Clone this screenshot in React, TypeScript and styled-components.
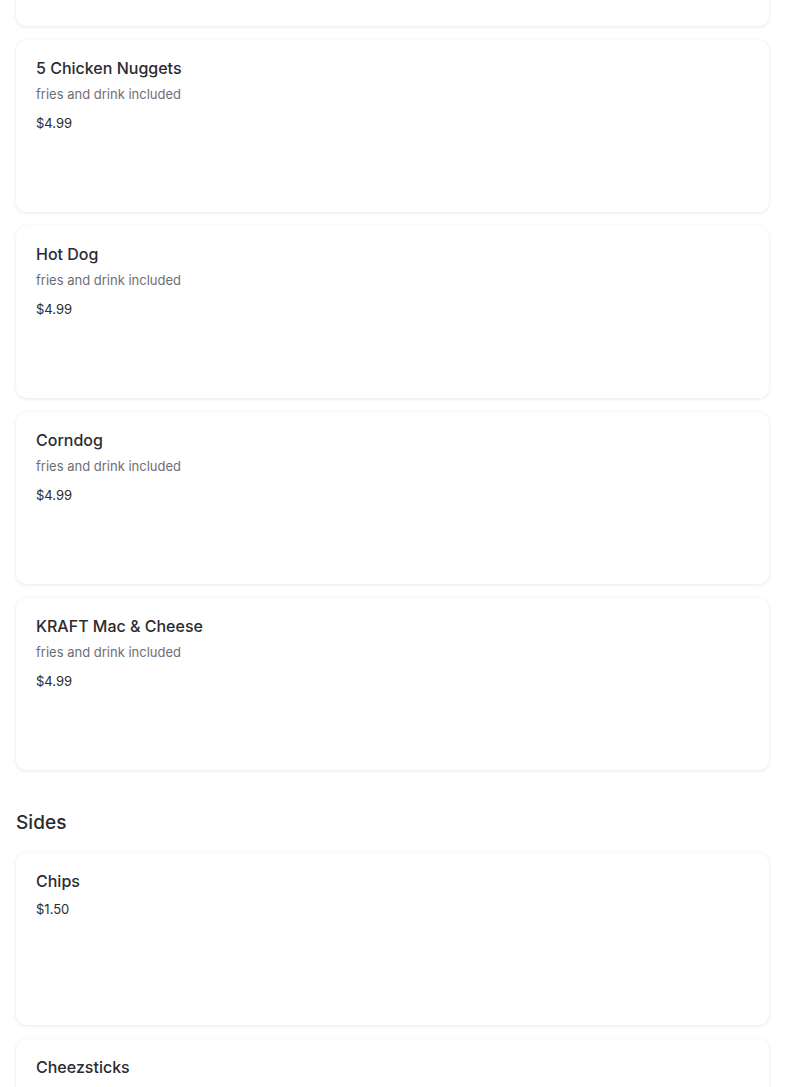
import React from "react";
import styled, { createGlobalStyle } from "styled-components";

const Global = createGlobalStyle`
  html, body { margin: 0; padding: 0; background: #ffffff; }
  body { font-family: Inter, "Noto Sans", "Liberation Sans", sans-serif; color: #2b2b31; }
`;

const Page = styled.main`
  padding: 0 16px;
  margin-top: -146px;
  display: flex;
  flex-direction: column;
`;

const Section = styled.section`
  display: flex;
  flex-direction: column;
  gap: 14px;
`;

const SectionTitle = styled.h2`
  margin: 39px 0 16px;
  font-size: 19px;
  line-height: 28px;
  font-weight: 500;
  color: #2b2b31;
  letter-spacing: 0.1px;
`;

const Card = styled.article`
  box-sizing: border-box;
  height: 172px;
  background: #fff;
  border-radius: 10px;
  box-shadow: 0 1px 4px rgba(0, 0, 0, 0.09), 0 0 1px rgba(0, 0, 0, 0.06);
  padding: 18px 20px;
  display: flex;
  flex-direction: column;
`;

const Name = styled.h3`
  margin: 0;
  font-size: 16px;
  line-height: 20px;
  font-weight: 500;
  color: #2b2b31;
`;

const Desc = styled.p`
  margin: 6px 0 0;
  font-size: 13px;
  line-height: 20px;
  color: #6e6e74;
`;

const Price = styled.span<{ $afterDesc: boolean }>`
  margin-top: ${(p) => (p.$afterDesc ? "9px" : "8px")};
  font-size: 13px;
  line-height: 20px;
  color: #2b2b31;
`;

type Item = { name: string; desc?: string; price?: string };

const combos: Item[] = [
  { name: "5 Chicken Nuggets", desc: "fries and drink included", price: "$4.99" },
  { name: "Hot Dog", desc: "fries and drink included", price: "$4.99" },
  { name: "Corndog", desc: "fries and drink included", price: "$4.99" },
  { name: "KRAFT Mac & Cheese", desc: "fries and drink included", price: "$4.99" },
];

const sides: Item[] = [{ name: "Chips", price: "$1.50" }, { name: "Cheezsticks" }];

const MenuCard = ({ item }: { item: Item }) => (
  <Card>
    <Name>{item.name}</Name>
    {item.desc && <Desc>{item.desc}</Desc>}
    {item.price && <Price $afterDesc={!!item.desc}>{item.price}</Price>}
  </Card>
);

export default function App() {
  return (
    <>
      <Global />
      <Page>
        <Section>
          <Card aria-hidden="true" />
          {combos.map((it) => (
            <MenuCard key={it.name} item={it} />
          ))}
        </Section>
        <SectionTitle>Sides</SectionTitle>
        <Section>
          {sides.map((it) => (
            <MenuCard key={it.name} item={it} />
          ))}
        </Section>
      </Page>
    </>
  );
}
